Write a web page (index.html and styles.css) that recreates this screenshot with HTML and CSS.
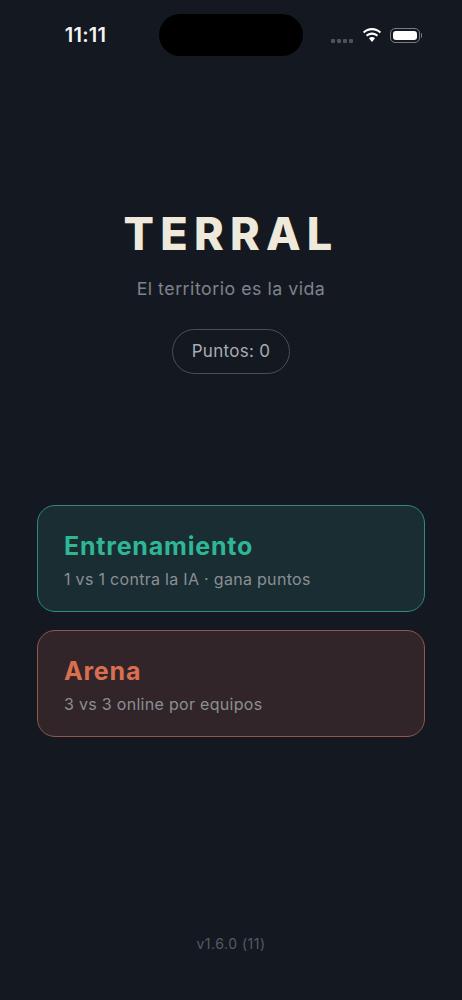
FILE: index.html
```html
<!DOCTYPE html>
<html>
<head>
	<meta charset="utf-8">
	<title>Terral</title>
	<meta name="viewport" content="width=device-width, initial-scale=1">
	<link rel="stylesheet" href="styles.css">
</head>
<body>
	<div class="status-bar">
		<div class="status-time">11:11</div>
		<div class="status-island"></div>
		<div class="status-icons">
			<div class="signal-dots"><i></i><i></i><i></i><i></i></div>
			<svg class="wifi" width="20" height="15" viewBox="0 0 20 15">
				<path d="M10 2.2c3 0 5.7 1.1 7.8 3.1l1.3-1.5C16.700 1.400 13.500 0 10 0S3.300 1.400.9 3.800l1.300 1.500C4.300 3.300 7 2.200 10 2.200z" fill="#fff"/>
				<path d="M10 6.700c1.800 0 3.400.7 4.700 1.800l1.400-1.500C14.500 5.500 12.300 4.500 10 4.500S5.500 5.500 3.900 7l1.400 1.500C6.600 7.400 8.200 6.700 10 6.700z" fill="#fff"/>
				<path d="M10 9c-1.200 0-2.200.4-3 1.200l3 3.800 3-3.800C12.200 9.400 11.200 9 10 9z" fill="#fff"/>
			</svg>
			<div class="battery"><div class="battery-fill"></div></div>
			<div class="battery-tip"></div>
		</div>
	</div>

	<header class="hero">
		<h1 class="title">TERRAL</h1>
		<p class="tagline">El territorio es la vida</p>
		<div class="points">Puntos: 0</div>
	</header>

	<main class="modes">
		<div class="mode mode-training">
			<h2 class="mode-name">Entrenamiento</h2>
			<p class="mode-desc">1 vs 1 contra la IA · gana puntos</p>
		</div>
		<div class="mode mode-arena">
			<h2 class="mode-name">Arena</h2>
			<p class="mode-desc">3 vs 3 online por equipos</p>
		</div>
	</main>

	<footer class="version">v1.6.0 (11)</footer>
</body>
</html>
```

FILE: styles.css
```css
html, body {
	margin: 0;
	padding: 0;
}
body {
	width: 462px;
	height: 1000px;
	overflow: hidden;
	background-color: #141921;
	font-family: Inter, "Noto Sans", sans-serif;
	display: flex;
	flex-direction: column;
}

/* status bar */
.status-bar {
	height: 42px;
	padding-top: 14px;
	display: grid;
	grid-template-columns: 159px 144px 159px;
	align-items: center;
}
.status-time {
	text-align: center;
	padding-left: 12px;
	color: #f4f4f4;
	font-size: 20px;
	font-weight: 600;
	letter-spacing: 0.3px;
}
.status-island {
	height: 42px;
	background-color: #000;
	border-radius: 21px;
}
.status-icons {
	height: 15px;
	display: flex;
	align-items: center;
	padding-left: 28px;
}
.signal-dots {
	display: flex;
	gap: 2px;
	align-self: flex-end;
	margin-right: 9px;
}
.signal-dots i {
	width: 4px;
	height: 4px;
	border-radius: 1px;
	background-color: #4e525a;
}
.wifi {
	margin-right: 8px;
}
.battery {
	width: 30px;
	height: 15px;
	box-sizing: border-box;
	padding: 2px;
	border: 1px solid #777b82;
	border-radius: 5px;
}
.battery-fill {
	height: 100%;
	background-color: #fff;
	border-radius: 3px;
}
.battery-tip {
	width: 1px;
	height: 5px;
	margin-left: 1px;
	background-color: #777b82;
	border-radius: 0 1px 1px 0;
}

/* title block */
.hero {
	margin-top: 151px;
	text-align: center;
}
.title {
	margin: 0;
	color: #efe9dc;
	font-size: 45px;
	line-height: 54px;
	font-weight: 800;
	letter-spacing: 6.200px;
}
.tagline {
	margin: 16px 0 0;
	color: #7f838b;
	font-size: 17.800px;
	line-height: 24px;
	letter-spacing: 0.5px;
}
.points {
	display: inline-block;
	margin-top: 28px;
	padding: 0 19px;
	height: 43px;
	line-height: 43px;
	border: 1px solid #4a4e56;
	border-radius: 23px;
	color: #a9acb1;
	font-size: 17px;
	letter-spacing: 0.3px;
}

/* mode cards */
.modes {
	margin: 131px 37px 0;
	display: flex;
	flex-direction: column;
	gap: 18px;
}
.mode {
	height: 107px;
	box-sizing: border-box;
	padding: 25px 26px 0;
	border: 1px solid;
	border-radius: 18px;
}
.mode-training {
	background-color: #192d33;
	border-color: #2f8a7c;
}
.mode-arena {
	background-color: #312529;
	border-color: #935749;
}
.mode-name {
	margin: 0;
	font-size: 25px;
	line-height: 30px;
	font-weight: 700;
	letter-spacing: 0.8px;
}
.mode-training .mode-name {
	color: #2fb795;
}
.mode-arena .mode-name {
	color: #d96f50;
}
.mode-desc {
	margin: 8px 0 0;
	color: #8b8f93;
	font-size: 16px;
	line-height: 20px;
	letter-spacing: 0.3px;
}

.version {
	margin-top: 198px;
	text-align: center;
	color: #555962;
	font-size: 14px;
	line-height: 18px;
	letter-spacing: 0.5px;
}
```
